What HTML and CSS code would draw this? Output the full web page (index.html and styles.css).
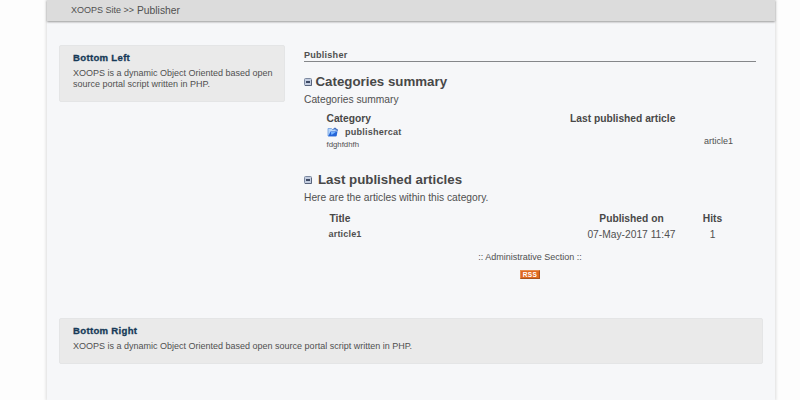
FILE: index.html
```html
<!DOCTYPE html>
<html lang="en">
<head>
<meta charset="utf-8">
<title>XOOPS Site - Publisher</title>
<link rel="stylesheet" href="styles.css">
</head>
<body>
<div class="page">
  <nav class="crumbs"><span class="site">XOOPS Site &gt;&gt;</span><span class="current">Publisher</span></nav>
  <div class="columns">
    <aside class="block side">
      <h3>Bottom Left</h3>
      <p>XOOPS is a dynamic Object Oriented based open<br>source portal script written in PHP.</p>
    </aside>
    <main class="main">
      <div class="module">Publisher</div>
      <h2><svg class="toggle" viewBox="0 0 8 8"><rect x=".5" y=".5" width="7" height="7" rx="1" fill="#c3cde0" stroke="#7c889f"/><path d="M1 7.5h6.5V2" fill="none" stroke="#59647c"/><path d="M2 4h4" stroke="#1c2945" stroke-width="1.6"/></svg><span>Categories summary</span></h2>
      <p class="intro">Categories summary</p>
      <div class="categories">
        <div class="cat">
          <div class="th">Category</div>
          <div class="catname"><svg class="folder" viewBox="0 0 12 10"><path d="M1 9V1.5h3.5l1 1H9V9z" fill="#b9d7fa" stroke="#6d9de0" stroke-width=".8"/><path d="M1.2 9.2 3.5 4.5h7L9.5 9.2z" fill="#2465d8"/><path d="M3.8 5h5L4.5 8z" fill="#79b5ff"/><path d="M6 2.5C7 .8 9 .8 9.7 2.3" fill="none" stroke="#2459ba"/><path d="M8.3 2.2h2.4v2.2z" fill="#2459ba"/></svg><b>publishercat</b></div>
          <div class="desc">fdghfdhfh</div>
        </div>
        <div class="last">
          <div class="th">Last published article</div>
          <div class="lastname">article1</div>
        </div>
      </div>
      <h2 class="second"><svg class="toggle" viewBox="0 0 8 8"><rect x=".5" y=".5" width="7" height="7" rx="1" fill="#c3cde0" stroke="#7c889f"/><path d="M1 7.5h6.5V2" fill="none" stroke="#59647c"/><path d="M2 4h4" stroke="#1c2945" stroke-width="1.6"/></svg><span>Last published articles</span></h2>
      <p class="intro">Here are the articles within this category.</p>
      <div class="articles">
        <div class="th title">Title</div><div class="th">Published on</div><div class="th">Hits</div>
        <div class="artname">article1</div><div>07-May-2017 11:47</div><div>1</div>
      </div>
      <div class="admin">:: Administrative Section ::</div>
      <div class="rss"><span>RSS</span></div>
    </main>
  </div>
  <aside class="block bottom">
    <h3>Bottom Right</h3>
    <p>XOOPS is a dynamic Object Oriented based open source portal script written in PHP.</p>
  </aside>
</div>
</body>
</html>
```
FILE: styles.css
```css
* { box-sizing: border-box; }
body {
  margin: 0;
  height: 400px;
  overflow: hidden;
  background: #fdfdfd;
  color: #505050;
  font-family: "Liberation Sans", Arial, sans-serif;
}
h2, h3, p { margin: 0; }
.page {
  width: 728px;
  height: 400px;
  margin-left: 47px;
  background: #f6f7f9;
  box-shadow: 0 0 3px 1px #dedede;
}
.crumbs {
  display: flex;
  height: 21px;
  padding-left: 24px;
  line-height: 21px;
  background: #dcdcdc;
  box-shadow: 0 1px 2px #999;
}
.site { width: 66px; font-size: 9px; }
.current { font-size: 10.3px; }
.columns { display: flex; height: 297px; padding: 24px 0 0 12px; }
.block {
  background: #eaeaea;
  border: 1px solid #e4e5e6;
  border-radius: 2px;
  padding: 7px 13px;
}
.block h3 {
  color: #173a58;
  font-size: 9.6px;
  line-height: 9px;
  letter-spacing: .3px;
  -webkit-text-stroke: .3px #173a58;
}
.block p { margin-top: 6px; font-size: 9px; line-height: 11px; white-space: nowrap; }
.side { width: 226px; height: 57px; }
.bottom { width: 704px; height: 46px; margin-left: 12px; }
.main { width: 452px; margin-left: 19px; }
.module {
  height: 17px;
  border-bottom: 1px solid #85878a;
  font-size: 9.1px;
  font-weight: bold;
  line-height: 20px;
  letter-spacing: .22px;
}
h2 {
  display: flex;
  align-items: center;
  height: 16px;
  margin-top: 12px;
  font-size: 13.3px;
  line-height: 16px;
  color: #484848;
}
.toggle { width: 8px; height: 8px; margin-right: 3.5px; }
.intro { margin-top: 3px; font-size: 10.25px; line-height: 13px; }
.th { font-size: 10.25px; font-weight: bold; line-height: 13px; color: #484848; }
.categories { display: flex; justify-content: space-between; height: 46px; margin-top: 6px; padding: 0 23px 0 22.5px; }
.catname { display: flex; align-items: center; height: 13px; font-size: 9.1px; letter-spacing: .2px; }
.folder { width: 12px; height: 10px; margin-right: 6.5px; }
.desc { font-size: 7.8px; line-height: 13px; }
.last { width: 163px; }
.lastname { margin-top: 10px; font-size: 9px; line-height: 12px; text-align: right; }
.second { margin-top: 14px; }
.second .toggle { margin-right: 6px; }
.articles {
  display: grid;
  grid-template-columns: 1fr 120px 42px;
  row-gap: 3px;
  margin: 8px 22.5px 0 24.5px;
  font-size: 10.25px;
  line-height: 13px;
  text-align: center;
}
.articles .title, .artname { text-align: left; }
.title { padding-left: 1px; }
.artname { font-size: 9.1px; font-weight: bold; letter-spacing: .15px; }
.admin { margin-top: 10px; font-size: 9px; line-height: 12px; text-align: center; }
.rss { display: flex; justify-content: center; margin-top: 7px; }
.rss span {
  width: 20px;
  height: 9px;
  border: 1px solid;
  border-color: #e58c4f #a75420 #a75420 #e58c4f;
  background: #e0681f;
  color: #fff;
  font-size: 6.5px;
  font-weight: bold;
  line-height: 7px;
  letter-spacing: .4px;
  text-align: center;
}
```
